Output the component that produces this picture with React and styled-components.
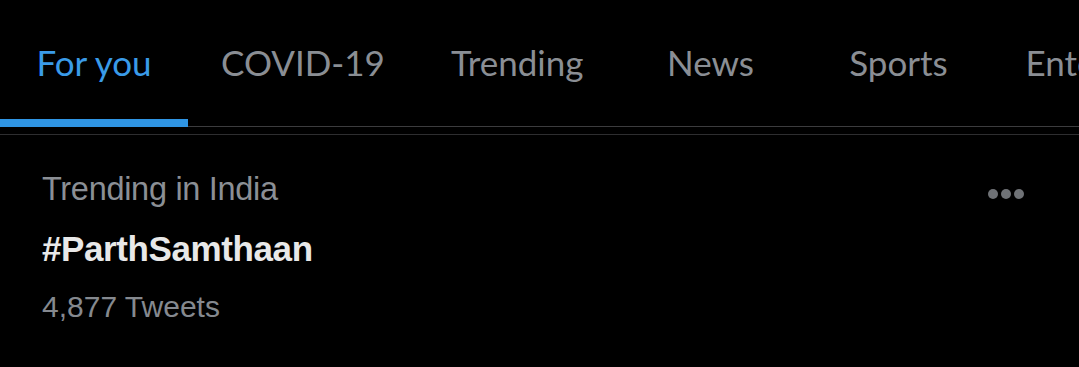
import React from 'react';
import styled, { createGlobalStyle } from 'styled-components';

const GlobalStyle = createGlobalStyle`
  html, body {
    margin: 0;
    padding: 0;
    background: #000;
  }
  body {
    font-family: "Liberation Sans", Arial, sans-serif;
    overflow: hidden;
  }
`;

const Page = styled.div`
  width: 1079px;
  height: 367px;
  background: #000;
  overflow: hidden;
`;

const TabBar = styled.div`
  display: flex;
  flex-direction: row;
  height: 126px;
  border-bottom: 1px solid #3c3c3e;
  white-space: nowrap;
`;

const Tab = styled.div`
  box-sizing: border-box;
  position: relative;
  flex: none;
  min-width: 188px;
  padding: 0 33px;
  display: flex;
  align-items: center;
  justify-content: center;
  padding-bottom: 2px;
  font-family: "Lato", sans-serif;
  font-weight: 400;
  font-size: 35px;
  color: ${p => (p.active ? '#3a9be8' : '#8a8e94')};

  &::after {
    content: '';
    display: ${p => (p.active ? 'block' : 'none')};
    position: absolute;
    left: 0;
    right: 0;
    bottom: -1px;
    height: 8px;
    background: #2f95e4;
  }
`;

const SubLine = styled.div`
  height: 7px;
  border-bottom: 1px solid #2e2e30;
`;

const Trend = styled.div`
  display: flex;
  flex-direction: row;
  justify-content: space-between;
  padding: 35px 55px 0 42px;
`;

const Info = styled.div`
  display: flex;
  flex-direction: column;
`;

const Context = styled.div`
  font-size: 32.5px;
  color: #8b8f95;
  line-height: 38px;
  letter-spacing: -0.3px;
`;

const Tag = styled.div`
  font-size: 35px;
  font-weight: 700;
  color: #e8e8e8;
  line-height: 40px;
  margin-top: 21px;
  letter-spacing: -0.4px;
`;

const Count = styled.div`
  font-size: 30px;
  color: #85898f;
  line-height: 36px;
  margin-top: 20px;
`;

const More = styled.div`
  display: flex;
  gap: 3px;
  margin-top: 19px;
  height: 12px;
`;

const Dot = styled.span`
  width: 10px;
  height: 10px;
  border-radius: 50%;
  background: #6f7276;
`;

const tabs = ['For you', 'COVID-19', 'Trending', 'News', 'Sports', 'Entertainment'];

export default function App() {
  return (
    <Page>
      <GlobalStyle />
      <TabBar>
        {tabs.map((t, i) => (
          <Tab key={t} active={i === 0}>{t}</Tab>
        ))}
      </TabBar>
      <SubLine />
      <Trend>
        <Info>
          <Context>Trending in India</Context>
          <Tag>#ParthSamthaan</Tag>
          <Count>4,877 Tweets</Count>
        </Info>
        <More>
          <Dot />
          <Dot />
          <Dot />
        </More>
      </Trend>
    </Page>
  );
}
